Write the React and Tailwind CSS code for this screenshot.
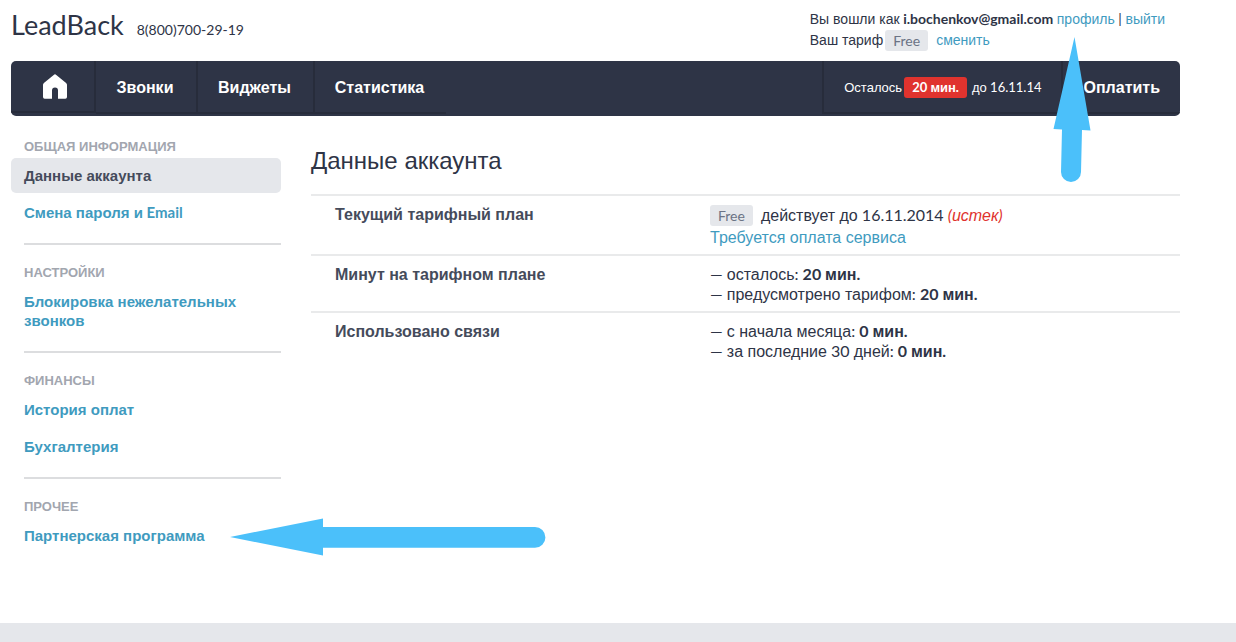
import React from "react";

const SECTIONS = [
  {
    title: "ОБЩАЯ ИНФОРМАЦИЯ",
    items: [
      { label: "Данные аккаунта", active: true },
      { label: <>Смена пароля и<Latin> Email</Latin></> },
    ],
  },
  { title: "НАСТРОЙКИ", items: [{ label: "Блокировка нежелательных звонков" }] },
  { title: "ФИНАНСЫ", items: [{ label: "История оплат" }, { label: "Бухгалтерия" }] },
  { title: "ПРОЧЕЕ", items: [{ label: "Партнерская программа" }] },
];

// Latin letters, digits and punctuation are set in Lato, Cyrillic in Liberation Sans.
function Latin({ children }) {
  return <span className="font-['Lato',sans-serif] leading-none">{children}</span>;
}

function Link({ children }) {
  return <a href="#" className="text-[#3f9bbf] hover:underline">{children}</a>;
}

function FreeBadge() {
  return (
    <span className="inline-block rounded-[3px] bg-[#e5e7eb] px-2 font-['Lato',sans-serif] text-[14px] leading-[21px] text-[#6b7385]">
      Free
    </span>
  );
}

function Header() {
  return (
    <header className="flex items-start justify-between pt-[9px] pr-[15px]">
      <div className="flex items-baseline gap-[13px] font-['Lato',sans-serif]">
        <a href="#" className="text-[27px] leading-[32px]">LeadBack</a>
        <span className="text-[14px]">8(800)700-29-19</span>
      </div>
      <div className="text-[14px] leading-[21px]">
        <div>
          Вы вошли как<Latin> <b>i.bochenkov@gmail.com</b> </Latin><Link>профиль</Link><Latin> | </Latin><Link>выйти</Link>
        </div>
        <div className="flex items-center gap-[2px]">
          <span>Ваш тариф</span>
          <FreeBadge />
          <span className="pl-[6px]"><Link>сменить</Link></span>
        </div>
      </div>
    </header>
  );
}

function Navbar() {
  return (
    <nav className="mt-[10px] flex h-[55px] items-stretch overflow-hidden rounded-[5px] bg-[#2e3446] pb-px text-[16px] font-bold text-white">
      <a href="#" aria-label="Главная" className="mb-[2px] flex w-[85px] items-center justify-center border-r-2 border-b-2 border-[#272c3b] pl-[5px]">
        <svg width="24" height="25" viewBox="0 0 24 25" fill="currentColor" aria-hidden="true">
          <path d="M12 0.3 Q11.4 0.3 10.700 0.900 L0.900 8.900 Q0 9.700 0 10.800 V23 Q0 24.700 1.700 24.700 H9 V16.500 Q9 13.500 12 13.500 Q15 13.500 15 16.500 V24.700 H22.300 Q24 24.700 24 23 V10.800 Q24 9.700 23.100 8.900 L13.300 0.900 Q12.600 0.300 12 0.300 Z" />
        </svg>
      </a>
      <a href="#" className="mb-px flex w-[102px] items-center justify-center border-r-2 border-b-2 border-[#272c3b] pt-[2px] pr-[2px]">Звонки</a>
      <a href="#" className="mb-px flex w-[117px] items-center justify-center border-r-2 border-b-2 border-[#272c3b] pt-[2px] pr-[2px]">Виджеты</a>
      <a href="#" className="mb-px flex w-[131px] items-center justify-center border-b-2 border-[#272c3b] pt-[2px] pr-[2px]">Статистика</a>
      <div className="mb-px ml-auto flex items-center border-x-2 border-b-2 border-[#272c3b] px-5 pt-[2px] text-[13px] font-normal">
        <span>Осталось</span>
        <b className="mx-[2px] rounded-[3px] bg-[#e0332e] px-2 leading-[21px]"><Latin>20 </Latin>мин<Latin>.</Latin></b>
        <span className="pl-[3px]">до<Latin> 16.11.14</Latin></span>
      </div>
      <a href="#" className="mb-px flex items-center border-b-2 border-[#272c3b] px-5 pt-[2px]">Оплатить</a>
    </nav>
  );
}

function Sidebar() {
  return (
    <aside className="w-[270px] shrink-0 pt-[22px]">
      {SECTIONS.map((section, i) => (
        <section key={section.title}>
          {i > 0 && <hr className="mt-[13px] mb-[19px] ml-[13px] border-t-2 border-[#dcdddf]" />}
          <h2 className="mb-[2px] pl-[13px] text-[13px] leading-[18px] font-bold text-[#a2a6af]">{section.title}</h2>
          <ul className="flex flex-col gap-[2px]">
            {section.items.map((item, j) => (
              <li key={j}>
                <a
                  href="#"
                  className={
                    item.active
                      ? "block rounded-[5px] bg-[#e5e7eb] px-[13px] py-2 text-[15px] leading-[19px] font-bold text-[#454b5b]"
                      : "block px-[13px] py-2 text-[15px] leading-[19px] font-bold text-[#3f9bbf]"
                  }
                >
                  {item.label}
                </a>
              </li>
            ))}
          </ul>
        </section>
      ))}
    </aside>
  );
}

function Row({ title, children }) {
  return (
    <tr className="border-t-2 border-[#e9eaeb] align-top">
      <th scope="row" className="w-[399px] pt-[9px] pl-6 text-left font-bold text-[#454b5b]">{title}</th>
      <td className="pt-[9px] pb-[6px]">{children}</td>
    </tr>
  );
}

function Minutes({ label, value }) {
  return (
    <div>
      <Latin>— </Latin>{label}<Latin>: </Latin>
      <b><Latin>{value} </Latin>мин<Latin>.</Latin></b>
    </div>
  );
}

function Account() {
  return (
    <main className="min-w-0 flex-1 pt-[29px]">
      <h1 className="mb-[17px] text-[24px] leading-[32px]">Данные аккаунта</h1>
      <table className="w-full border-collapse text-[16px] leading-[20px]">
        <tbody>
          <Row title="Текущий тарифный план">
            <div className="flex items-center">
              <FreeBadge />
              <span className="pl-2">
                действует до<Latin> 16.11.2014 </Latin>
                <i className="text-[#e0332e]"><Latin>(</Latin>истек<Latin>)</Latin></i>
              </span>
            </div>
            <div className="pt-[2px]">
              <Link>Требуется оплата сервиса</Link>
            </div>
          </Row>
          <Row title="Минут на тарифном плане">
            <Minutes label="осталось" value={20} />
            <Minutes label="предусмотрено тарифом" value={20} />
          </Row>
          <Row title="Использовано связи">
            <Minutes label="с начала месяца" value={0} />
            <Minutes label={<>за последние<Latin> 30 </Latin>дней</>} value={0} />
          </Row>
        </tbody>
      </table>
    </main>
  );
}

function Arrows() {
  return (
    <>
      <svg className="pointer-events-none absolute top-[37px] right-[145px]" width="38" height="146" viewBox="0 0 38 146" fill="#4bc0fa" aria-hidden="true">
        <path d="M21.500 0 L37.500 93.500 L29 93 L28 135 A10 10 0 0 1 8 135 L9 92.500 L0.500 92 Z" />
      </svg>
      <svg className="pointer-events-none absolute top-[518px] left-[230px]" width="316" height="38" viewBox="0 0 316 38" fill="#4bc0fa" aria-hidden="true">
        <path d="M0 19 L93 0.500 V9 H305 A10.300 10.300 0 0 1 305 29.800 H93 V37.500 Z" />
      </svg>
    </>
  );
}

export default function App() {
  return (
    <div className="relative flex min-h-screen flex-col bg-white font-['Liberation_Sans',Arial,sans-serif] text-[#2e3446]">
      <div className="flex-1 pr-14 pl-[11px]">
        <Header />
        <Navbar />
        <div className="flex gap-[30px] pb-16">
          <Sidebar />
          <Account />
        </div>
      </div>
      <footer className="h-[19px] bg-[#e5e7eb]" />
      <Arrows />
    </div>
  );
}
